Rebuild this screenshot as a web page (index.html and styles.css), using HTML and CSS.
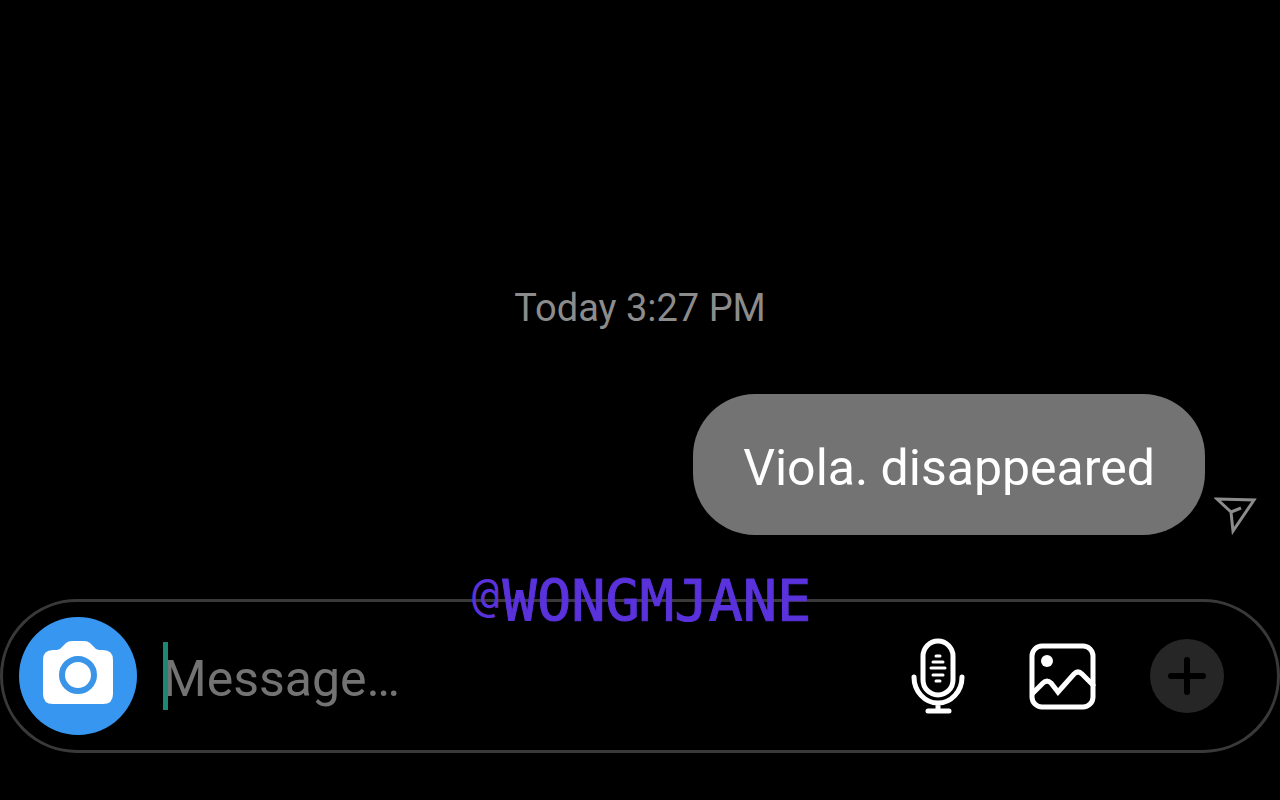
FILE: index.html
```html
<!DOCTYPE html>
<html lang="en">
<head>
<meta charset="utf-8">
<meta name="viewport" content="width=device-width, initial-scale=1">
<title>Messages</title>
<link rel="stylesheet" href="styles.css">
</head>
<body>
<main class="thread">
  <time class="date">Today 3:27 PM</time>
  <div class="message">
    <p class="bubble">Viola. disappeared</p>
    <svg class="sent" viewBox="0 0 44 42" aria-hidden="true"><path d="M3 6 40 7 19 38 17 19ZM17 19 27 15"/></svg>
  </div>
</main>
<form class="composer">
  <button class="camera" type="button" aria-label="Camera">
    <svg viewBox="0 0 118 118" aria-hidden="true">
      <path fill="#fff" d="M34 33h4q3 0 5-3l4-4q2-2 6-2h12q4 0 6 2l4 4q2 3 5 3h4q10 0 10 10v34q0 10-10 10H34q-10 0-10-10V43q0-10 10-10Z"/>
      <circle cx="59" cy="58" r="16" fill="none" stroke="#3a94e8" stroke-width="6"/>
    </svg>
  </button>
  <div class="field">
    <span class="caret"></span>
    <input class="input" type="text" placeholder="Message…" aria-label="Message">
  </div>
  <div class="actions">
    <button class="action mic" type="button" aria-label="Record voice message">
      <svg viewBox="0 0 54 76" aria-hidden="true">
        <rect x="12" y="3" width="30" height="54" rx="15"/>
        <path d="M3 39a24 26 0 0 0 48 0M27 65v8M17 73h21"/>
        <path class="thin" d="M25 18h4M22 24h10M20 30h14M22 37h10M25 43h4"/>
      </svg>
    </button>
    <button class="action gallery" type="button" aria-label="Send a photo">
      <svg viewBox="0 0 68 68" aria-hidden="true">
        <rect x="4" y="4" width="61" height="61" rx="10"/>
        <circle class="dot" cx="19" cy="19" r="6"/>
        <path d="M5 51 15 41q4-4 8 0l7 9 16-18q4-4 8 0l11 11"/>
      </svg>
    </button>
    <button class="action more" type="button" aria-label="More">
      <svg viewBox="0 0 74 74" aria-hidden="true"><path d="M37 21v32M21 37h32"/></svg>
    </button>
  </div>
  <span class="handle"><span class="at">@</span>WONGMJANE</span>
</form>
</body>
</html>
```
FILE: styles.css
```css
* {
  box-sizing: border-box;
}

body {
  margin: 0;
  min-height: 100vh;
  display: flex;
  flex-direction: column;
  justify-content: flex-end;
  padding-bottom: 47px;
  background: #000;
  color: #fff;
  font-family: Roboto, "Liberation Sans", sans-serif;
}

.thread {
  display: flex;
  flex-direction: column;
  gap: 64px;
  padding: 0 22px 64px;
}

.date {
  align-self: center;
  color: #8c8c8c;
  font-size: 38px;
  line-height: 44px;
}

.message {
  display: flex;
  justify-content: flex-end;
  align-items: flex-end;
  gap: 9px;
}

.bubble {
  margin: 0;
  padding: 44px 50px 37px;
  border-radius: 62px;
  background: #737373;
  font-size: 50px;
  line-height: 60px;
}

.sent {
  width: 44px;
  height: 42px;
  fill: none;
  stroke: #8c8c8c;
  stroke-width: 3;
}

.composer {
  position: relative;
  display: flex;
  align-items: center;
  min-height: 154px;
  padding: 0 53px 0 16px;
  border: 3px solid #393939;
  border-radius: 77px;
}

button {
  flex: none;
  padding: 0;
  border: 0;
  background: none;
}

button svg {
  display: block;
  width: 100%;
}

.camera {
  width: 118px;
  height: 118px;
  border-radius: 50%;
  background: #3797f0;
}

.field {
  position: relative;
  flex: 1;
  min-width: 0;
  margin-left: 26px;
}

.caret {
  position: absolute;
  top: 0;
  left: 0;
  width: 5px;
  height: 68px;
  background: #1b8774;
}

.input {
  display: block;
  width: 100%;
  height: 68px;
  padding: 6px 0 0;
  border: 0;
  outline: 0;
  background: none;
  color: #fff;
  font: 50px Roboto, "Liberation Sans", sans-serif;
}

.input::placeholder {
  color: #737373;
  opacity: 1;
}

.actions {
  display: flex;
  align-items: center;
}

.action svg {
  fill: none;
  stroke: #fff;
  stroke-width: 5;
  stroke-linecap: round;
  stroke-linejoin: round;
}

.action .thin {
  stroke-width: 3;
}

.action .dot {
  fill: #fff;
  stroke: none;
}

.mic {
  width: 54px;
}

.gallery {
  width: 68px;
  margin-left: 63px;
}

.gallery svg {
  stroke-linejoin: miter;
}

.more {
  width: 74px;
  margin-left: 54px;
  border-radius: 50%;
  background: #262626;
}

.more svg {
  stroke: #000;
  stroke-width: 6;
}

.handle {
  position: absolute;
  top: -29px;
  left: 50%;
  transform: translateX(-50%);
  color: #5a32dc;
  font-family: "DejaVu Sans Mono", monospace;
  font-size: 57px;
  line-height: 56px;
  white-space: nowrap;
  -webkit-text-stroke: 1px #5a32dc;
}

.at {
  display: inline-block;
  width: 34px;
  font-size: 46px;
  line-height: 44px;
  text-align: center;
  vertical-align: 10px;
  -webkit-text-stroke: 0;
}
```
